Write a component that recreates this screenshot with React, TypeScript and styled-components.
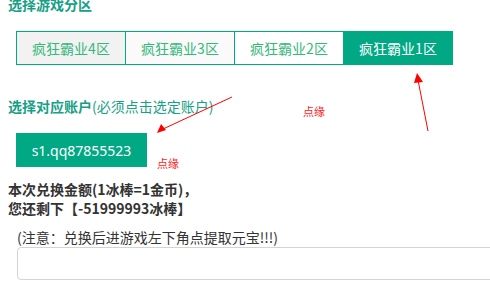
import React, { useState } from "react";
import styled, { createGlobalStyle } from "styled-components";

const GlobalStyle = createGlobalStyle`
  html, body {
    margin: 0;
    padding: 0;
    background: #ffffff;
    overflow: hidden;
  }
  body {
    font-family: "Noto Sans CJK SC", "Noto Sans", sans-serif;
  }
`;

const Page = styled.div`
  position: relative;
  width: 490px;
  height: 288px;
  overflow: hidden;
  padding: 0 0 0 8px;
  box-sizing: border-box;
`;

const Heading = styled.div`
  margin-top: -6px;
  font-size: 14px;
  line-height: 20px;
  font-weight: bold;
  color: #17a086;
`;

const TabRow = styled.div`
  display: flex;
  margin: 17px 0 0 8px;
  width: 437px;
  border: 1px solid #00a884;
  box-sizing: border-box;
`;

const Tab = styled.div<{ $active?: boolean; $bg?: string }>`
  flex: 1;
  height: 32px;
  display: flex;
  align-items: center;
  justify-content: center;
  font-size: 14px;
  color: ${(p) => (p.$active ? "#ffffff" : "#36b87c")};
  background: ${(p) => (p.$active ? "#00a884" : p.$bg || "#ffffff")};
  border-left: 1px solid #00a884;
  cursor: pointer;
  &:first-child {
    border-left: none;
  }
`;

const Label = styled.div`
  margin-top: 31px;
  font-size: 14px;
  line-height: 20px;
  color: #17a086;
  b {
    font-weight: bold;
  }
`;

const AccountButton = styled.button`
  margin: 17px 0 0 8px;
  width: 131px;
  height: 34px;
  border: none;
  background: #00a884;
  color: #ffffff;
  font-family: "Noto Sans", sans-serif;
  font-size: 14px;
  padding: 0;
  cursor: pointer;
`;

const Summary = styled.div`
  margin-top: 13px;
  font-size: 14px;
  line-height: 19px;
  font-weight: bold;
  color: #333333;
`;

const Note = styled.div`
  margin: 10px 0 0 9px;
  font-size: 14px;
  line-height: 19px;
  color: #333333;
`;

const Input = styled.input`
  display: block;
  margin: 0 0 0 9px;
  width: 500px;
  height: 33px;
  box-sizing: border-box;
  border: 1px solid #d4d4d4;
  border-radius: 4px;
  outline: none;
`;

const Remark = styled.span<{ $x: number; $y: number }>`
  position: absolute;
  left: ${(p) => p.$x}px;
  top: ${(p) => p.$y}px;
  font-size: 11px;
  line-height: 14px;
  color: #ff1a1a;
`;

const Arrows = styled.svg`
  position: absolute;
  left: 0;
  top: 0;
  pointer-events: none;
`;

const zones = [
  { name: "疯狂霸业4区", bg: "#f2f2f2" },
  { name: "疯狂霸业3区", bg: "#fafafa" },
  { name: "疯狂霸业2区", bg: "#ffffff" },
  { name: "疯狂霸业1区", bg: "#ffffff" },
];

export default function App() {
  const [active, setActive] = useState(3);

  return (
    <Page>
      <GlobalStyle />
      <Heading>选择游戏分区</Heading>
      <TabRow>
        {zones.map((z, i) => (
          <Tab key={z.name} $active={i === active} $bg={z.bg} onClick={() => setActive(i)}>
            {z.name}
          </Tab>
        ))}
      </TabRow>
      <Label>
        <b>选择对应账户</b>(必须点击选定账户)
      </Label>
      <AccountButton>s1.qq87855523</AccountButton>
      <Summary>
        本次兑换金额(1冰棒=1金币)，
        <br />
        您还剩下【-51999993冰棒】
      </Summary>
      <Note>(注意：兑换后进游戏左下角点提取元宝!!!)</Note>
      <Input type="text" />

      <Remark $x={303} $y={104}>点缘</Remark>
      <Remark $x={157} $y={156}>点缘</Remark>

      <Arrows width="490" height="288" viewBox="0 0 490 288">
        <line x1="232" y1="97" x2="163" y2="129" stroke="#ff0000" strokeWidth="1" />
        <polygon points="157,133 161,124 166,130" fill="#ff0000" />
        <line x1="428" y1="131" x2="418" y2="80" stroke="#ff0000" strokeWidth="1" />
        <polygon points="417,73 414,83 423,82" fill="#ff0000" />
      </Arrows>
    </Page>
  );
}
